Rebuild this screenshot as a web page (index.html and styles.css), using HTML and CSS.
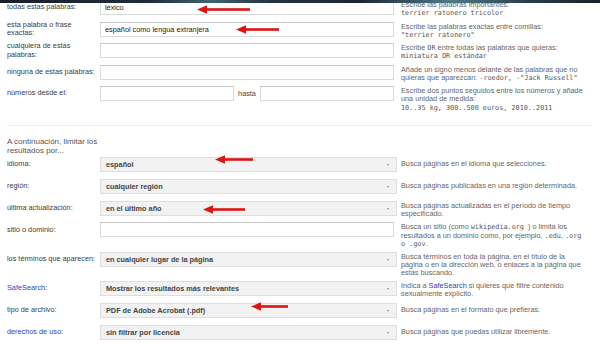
FILE: index.html
```html
<!DOCTYPE html>
<html lang="es">

<head>
    <meta charset="UTF-8">
    <meta name="viewport" content="width=device-width, initial-scale=1.0">
    <title>Búsqueda avanzada</title>
    <link rel="stylesheet" href="styles.css">
</head>

<body>
    <div class="band"></div>

    <main class="search">

        <!-- Buscar páginas con... -->
        <section class="group">
            <div class="row">
                <label class="label">todas estas palabras:</label>
                <div class="field">
                    <input class="input" type="text" value="léxico">
                    <svg class="arrow arrow-1" width="53" height="9" viewBox="0 0 53 9"><polygon points="0,4.5 10,0.3 10,8.7"/><rect x="9" y="3.2" width="44" height="2.6"/></svg>
                </div>
                <p class="help">Escribe las palabras importantes:<br><code>terrier ratonero tricolor</code></p>
            </div>

            <div class="row">
                <label class="label">esta palabra o frase<br>exactas:</label>
                <div class="field">
                    <input class="input" type="text" value="español como lengua extranjera">
                    <svg class="arrow arrow-2" width="43" height="9" viewBox="0 0 43 9"><polygon points="0,4.5 10,0.3 10,8.7"/><rect x="9" y="3.2" width="34" height="2.6"/></svg>
                </div>
                <p class="help">Escribe las palabras exactas entre comillas:<br><code>"terrier ratonero"</code></p>
            </div>

            <div class="row">
                <label class="label">cualquiera de estas<br>palabras:</label>
                <div class="field">
                    <input class="input" type="text">
                </div>
                <p class="help">Escribe <code>OR</code> entre todas las palabras que quieras:<br><code>miniatura OR estándar</code></p>
            </div>

            <div class="row">
                <label class="label">ninguna de estas palabras:</label>
                <div class="field">
                    <input class="input" type="text">
                </div>
                <p class="help">Añade un signo menos delante de las palabras que no<br>quieras que aparezcan: <code>-roedor, -"Jack Russell"</code></p>
            </div>

            <div class="row">
                <label class="label">números desde el:</label>
                <div class="field range">
                    <input class="input" type="text">
                    <span>hasta</span>
                    <input class="input" type="text">
                </div>
                <p class="help">Escribe dos puntos seguidos entre los números y añade<br>una unidad de medida:<br><code>10..35 kg, 300..500 euros, 2010..2011</code></p>
            </div>
        </section>

        <hr class="sep">

        <p class="intro">A continuación, limitar los<br>resultados por...</p>

        <!-- Limitar resultados -->
        <section class="group group-limit">
            <div class="row">
                <label class="label">idioma:</label>
                <div class="field">
                    <div class="select">español<span class="caret"></span></div>
                    <svg class="arrow arrow-3" width="38" height="9" viewBox="0 0 38 9"><polygon points="0,4.5 10,0.3 10,8.7"/><rect x="9" y="3.2" width="29" height="2.6"/></svg>
                </div>
                <p class="help help-one">Busca páginas en el idioma que selecciones.</p>
            </div>

            <div class="row">
                <label class="label">región:</label>
                <div class="field">
                    <div class="select">cualquier región<span class="caret"></span></div>
                </div>
                <p class="help help-one">Busca páginas publicadas en una región determinada.</p>
            </div>

            <div class="row">
                <label class="label">última actualización:</label>
                <div class="field">
                    <div class="select">en el último año<span class="caret"></span></div>
                    <svg class="arrow arrow-4" width="42" height="9" viewBox="0 0 42 9"><polygon points="0,4.5 10,0.3 10,8.7"/><rect x="9" y="3.2" width="33" height="2.6"/></svg>
                </div>
                <p class="help">Busca páginas actualizadas en el período de tiempo<br>especificado.</p>
            </div>

            <div class="row">
                <label class="label">sitio o dominio:</label>
                <div class="field">
                    <input class="input" type="text">
                </div>
                <p class="help">Busca un sitio (como <code> wikipedia.org </code>) o limita los<br>resultados a un dominio como, por ejemplo, <code>.edu</code>, <code>.org</code><br><code>o .gov</code>.</p>
            </div>

            <div class="row">
                <label class="label">los términos que aparecen:</label>
                <div class="field">
                    <div class="select">en cualquier lugar de la página<span class="caret"></span></div>
                </div>
                <p class="help">Busca términos en toda la página, en el título de la<br>página o en la dirección web, o enlaces a la página que<br>estás buscando.</p>
            </div>

            <div class="row">
                <label class="label"><a href="#">SafeSearch</a>:</label>
                <div class="field">
                    <div class="select">Mostrar los resultados más relevantes<span class="caret"></span></div>
                </div>
                <p class="help">Indica a <a href="#">SafeSearch</a> si quieres que filtre contenido<br>sexualmente explícito.</p>
            </div>

            <div class="row">
                <label class="label">tipo de archivo:</label>
                <div class="field">
                    <div class="select">PDF de Adobe Acrobat (.pdf)<span class="caret"></span></div>
                    <svg class="arrow arrow-5" width="37" height="9" viewBox="0 0 37 9"><polygon points="0,4.5 10,0.3 10,8.7"/><rect x="9" y="3.2" width="28" height="2.6"/></svg>
                </div>
                <p class="help help-one">Busca páginas en el formato que prefieras.</p>
            </div>

            <div class="row">
                <label class="label"><a href="#">derechos de uso</a>:</label>
                <div class="field">
                    <div class="select">sin filtrar por licencia<span class="caret"></span></div>
                </div>
                <p class="help help-one">Busca páginas que puedas utilizar libremente.</p>
            </div>
        </section>

    </main>
</body>

</html>
```

FILE: styles.css
```css
* {
    margin: 0;
    padding: 0;
    box-sizing: border-box;
}

body {
    font-family: "Liberation Sans", Arial, sans-serif;
    font-size: 7.3px;
    color: #444;
    background-color: #fff;
}

a {
    color: #3340b5;
    text-decoration: none;
}

code {
    font-family: "DejaVu Sans Mono", "Liberation Mono", monospace;
    font-size: 6.8px;
    color: #555;
}

/* franja de la imagen de arriba */
.band {
    position: absolute;
    top: 0;
    left: 0;
    right: 0;
    height: 3px;
    background: linear-gradient(90deg, #18202c 0%, #202c3a 25%, #3e6470 35%, #253442 45%, #1c2633 60%, #4d7c86 75%, #2a3e4a 88%, #18202c 100%);
    z-index: 2;
}

.search {
    padding: 0 8px 0 7px;
}

.row {
    display: grid;
    grid-template-columns: 93px 297px 1fr;
    align-items: start;
    margin-bottom: 6.5px;
}

.group-limit .row {
    margin-bottom: 6.8px;
}

.label {
    height: 15px;
    display: flex;
    align-items: center;
    line-height: 8.3px;
    color: #3c3c3c;
}

.field {
    position: relative;
    height: 15px;
}

.input {
    display: block;
    width: 294px;
    height: 15px;
    padding: 0 4px;
    border: 1px solid #dadada;
    border-top-color: #c6c6c6;
    font: inherit;
    color: #222;
    background-color: #fff;
    outline: none;
}

.range {
    display: flex;
    align-items: center;
    gap: 4px;
    width: 294px;
}

.range .input {
    flex: 1;
    width: auto;
    min-width: 0;
}

.select {
    position: relative;
    height: 15px;
    padding-left: 5px;
    display: flex;
    align-items: center;
    border: 1px solid #dedede;
    background-color: #f2f2f2;
    font-weight: bold;
    color: #444;
}

.caret {
    position: absolute;
    right: 7px;
    top: 6px;
    border-top: 2px solid #888;
    border-left: 1.5px solid transparent;
    border-right: 1.5px solid transparent;
}

.help {
    padding-left: 4px;
    margin-top: 1px;
    margin-bottom: -3.4px;
    line-height: 8.3px;
    color: #666;
}

.help-one {
    align-self: center;
    margin: 0;
}

.sep {
    border: 0;
    border-top: 1px solid #ececec;
    margin-top: 16.5px;
}

.intro {
    margin: 10.5px 0 2.5px;
    font-size: 8px;
    line-height: 9px;
    color: #555;
}

/* strzałki */
.arrow {
    position: absolute;
    fill: #dc1414;
    z-index: 1;
}

.arrow-1 {
    left: 97px;
    top: 4.5px;
}

.arrow-2 {
    left: 136px;
    top: 3.5px;
}

.arrow-3 {
    left: 115px;
    top: -2px;
}

.arrow-4 {
    left: 103px;
    top: 4.2px;
}

.arrow-5 {
    left: 151px;
    top: -0.5px;
}
```
